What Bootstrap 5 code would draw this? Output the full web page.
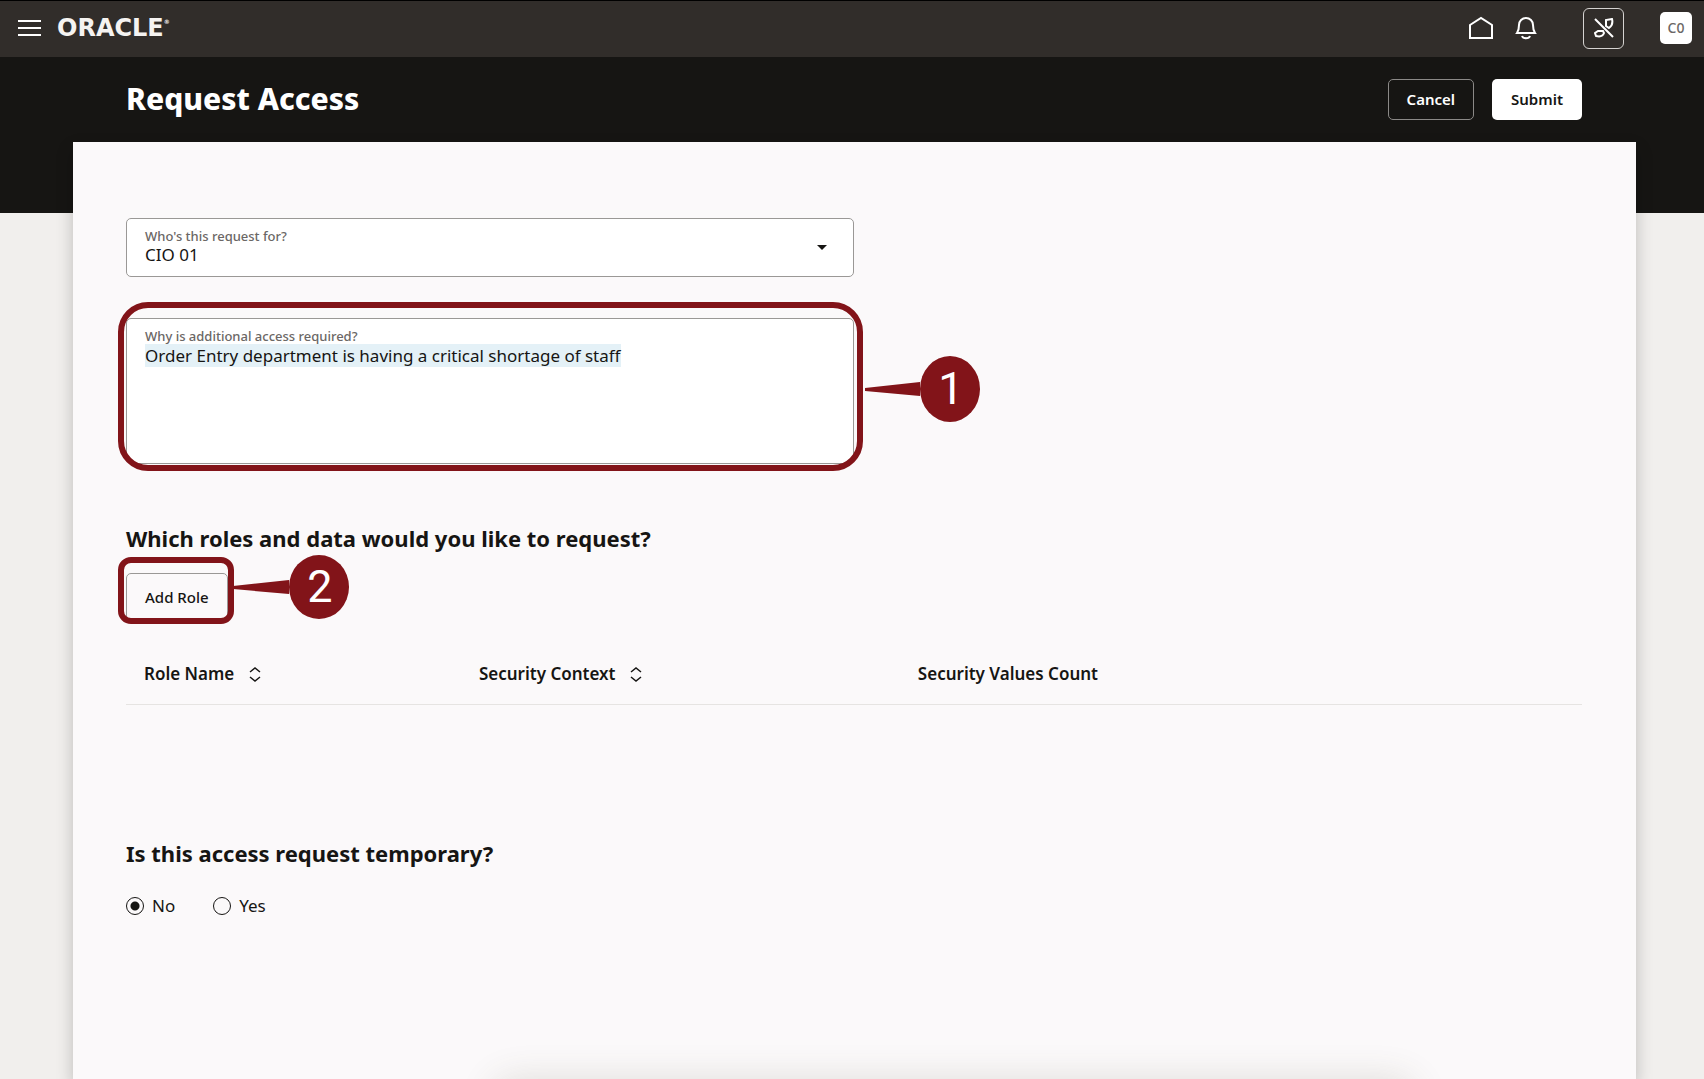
<!DOCTYPE html>
<html lang="en">
<head>
<meta charset="utf-8">
<meta name="viewport" content="width=device-width, initial-scale=1">
<title>Request Access</title>
<link href="https://cdn.jsdelivr.net/npm/bootstrap@5.3.0/dist/css/bootstrap.min.css" rel="stylesheet">
<style>
  body { font-family: "Noto Sans", "Open Sans", sans-serif; color: #161513; background: #f1efed; font-size: 17px; line-height: 22px; }
  .app-page { min-height: 100vh; background: linear-gradient(#161513 213px, transparent 213px); }
  .app-bar { height: 57px; background: #312d2a; border-top: 1px solid #000; padding: 0 12px 2px 18px; }
  .app-tools { gap: 22px; }
  .brand-word { font: bold 24px/24px "DejaVu Sans", sans-serif; color: #f5f3f1; }
  .brand-word sup { font-size: 6px; top: -12px; }
  .plain-btn { background: none; border: 0; padding: 0; line-height: 0; }
  .bar-btn { width: 41px; height: 41px; border: 1px solid #d5d3d1; border-radius: 6px; margin: 0 14px 0 24px; }
  .user-chip { width: 32px; height: 32px; border: 0; border-radius: 5px; background: #fff; color: #6b6765; font-size: 14px; font-weight: 500; padding: 0; }
  .sheet-wrap { padding: 0 68px 0 73px; }
  .page-head { height: 85px; padding: 0 54px 2px 53px; }
  .page-head h1 { font-size: 30px; line-height: 40px; font-weight: 800; color: #fff; }
  .page-actions { gap: 18px; padding-top: 2px; }
  .act-btn { height: 41px; padding: 0 18px 2px; font-size: 15px; line-height: 20px; font-weight: 600; border-radius: 5px; }
  .act-outline { border: 1px solid #8b8987; color: #fff; }
  .act-solid { background: #fff; color: #161513; }
  .sheet { background: #fbf9fa; padding: 76px 54px 0 53px; min-height: calc(100vh - 142px); box-shadow: 0 8px 16px rgba(0,0,0,.22); }
  .field-box { background: #fff; border: 1px solid #9a9896; border-radius: 5px; padding: 9px 18px 10px; }
  .field-box label { display: block; font-size: 13px; line-height: 16px; font-weight: 500; color: #6b6765; }
  .field-box select, .field-box textarea { display: block; width: 100%; border: 0; padding: 0; background: none; appearance: none; outline: 0; color: #161513; font-size: 17px; }
  .field-box select { line-height: 22px; height: 22px; }
  .field-box textarea { line-height: 23px; height: 109px; resize: none; }
  textarea::selection { background: #e4f1f7; color: #161513; }
  .fields { gap: 41px; }
  .section-title { font-size: 22px; line-height: 28px; font-weight: 700; margin: 0; }
  .title-roles { margin-top: 60px; }
  .add-row { margin-top: 21px; }
  .add-btn { height: 48px; padding: 0 18px; font-size: 15px; line-height: 20px; font-weight: 500; border: 1px solid #9a9896; border-radius: 5px; color: #161513; }
  .ring { position: absolute; border: 6px solid #821419; pointer-events: none; }
  .ring-field { inset: -17px -10px -8px -9px; border-radius: 30px; }
  .ring-btn { inset: -16px -6px -3px -8px; border-radius: 13px; }
  .callout { position: absolute; left: 100%; fill: #821419; pointer-events: none; }
  .callout text { font-family: Roboto, sans-serif; font-size: 45px; fill: #fff; }
  .callout-field { top: 37px; margin-left: 11px; }
  .callout-btn { top: -19px; margin-left: 5px; }
  .roles { --bs-table-bg: transparent; table-layout: fixed; margin: 32px 0 0; color: #161513; }
  .roles th { padding: 10px 18px 19px; font-weight: 600; border-bottom: 1px solid #e6e4e2; }
  .roles th svg { margin-left: 10px; }
  .roles td { height: 134px; border: 0; }
  .col-role { width: 23%; }
  .col-context { width: 30.15%; }
  .choice { gap: 38px; margin-top: 28px; }
  .choice input { appearance: none; width: 18px; height: 18px; margin: 0; border: 1px solid #161513; border-radius: 50%; }
  .choice input:checked { background: radial-gradient(circle, #161513 4px, transparent 5px); }
  .bottom-bar { position: fixed; left: 29%; right: 17%; top: 100%; height: 60px; border-radius: 20px; box-shadow: 0 0 36px rgba(80,80,50,.16); }
</style>
<script src="https://cdn.jsdelivr.net/npm/bootstrap@5.3.0/dist/js/bootstrap.bundle.min.js"></script>
</head>
<body>
<div class="app-page">
  <header class="app-bar d-flex align-items-center">
    <button type="button" class="plain-btn" aria-label="Navigation menu">
      <svg width="23" height="18" stroke="#fff" stroke-width="2"><path d="M0 2h23M0 9h23M0 16h23"/></svg>
    </button>
    <a href="#" class="brand-word text-decoration-none ms-3">ORACLE<sup>®</sup></a>
    <nav class="app-tools d-flex align-items-center ms-auto">
      <button type="button" class="plain-btn" aria-label="Home">
        <svg width="24" height="24" fill="none" stroke="#fff" stroke-width="2"><path d="M1 9 12 2l11 7v13H1z"/></svg>
      </button>
      <button type="button" class="plain-btn" aria-label="Notifications">
        <svg width="22" height="24" fill="none" stroke="#fff" stroke-width="2"><path d="M2 17c2-3 2-4 2-8a7 7 0 0 1 14 0c0 4 0 5 2 8zM7 20c1 3 7 3 8 0"/></svg>
      </button>
      <button type="button" class="plain-btn bar-btn" aria-label="Phone disconnected">
        <svg width="20" height="20" fill="none" stroke="#fff" stroke-width="2"><path d="m1 1 18 18M12 8V2l6-1c1 4 0 7-3 9zM9 13H4l-3 2 1 3c4 1 7 0 8-3z"/></svg>
      </button>
      <button type="button" class="user-chip">C0</button>
    </nav>
  </header>

  <div class="sheet-wrap">
    <div class="page-head d-flex align-items-center">
      <h1 class="m-0">Request Access</h1>
      <div class="page-actions d-flex ms-auto">
        <button type="button" class="btn act-btn act-outline">Cancel</button>
        <button type="submit" form="request" class="btn act-btn act-solid">Submit</button>
      </div>
    </div>

    <main class="sheet">
      <form id="request">
        <div class="fields d-flex flex-column w-50">
          <div class="field-box d-flex align-items-center">
            <div class="flex-grow-1">
              <label for="who">Who's this request for?</label>
              <select id="who"><option>CIO 01</option></select>
            </div>
            <svg class="me-2" width="10" height="5"><path d="M0 0h10L5 5z" fill="#161513"/></svg>
          </div>
          <div class="field-box position-relative">
            <label for="why">Why is additional access required?</label>
            <textarea id="why">Order Entry department is having a critical shortage of staff</textarea>
            <div class="ring ring-field"></div>
            <svg class="callout callout-field" width="116" height="66"><path d="M1 32 56 26v14L1 35z"/><ellipse cx="86" cy="33" rx="30" ry="33"/><text x="87" y="48" text-anchor="middle">1</text></svg>
          </div>
        </div>

        <h2 class="section-title title-roles">Which roles and data would you like to request?</h2>
        <div class="add-row d-flex">
          <div class="position-relative">
            <button type="button" class="btn add-btn">Add Role</button>
            <div class="ring ring-btn"></div>
            <svg class="callout callout-btn" width="116" height="66"><path d="M0 32 56 26v14L0 35z"/><ellipse cx="86" cy="33" rx="30" ry="32"/><text x="87" y="48" text-anchor="middle">2</text></svg>
          </div>
        </div>

        <table class="table roles">
          <colgroup><col class="col-role"><col class="col-context"><col></colgroup>
          <thead>
            <tr>
              <th scope="col">Role Name <svg width="12" height="16" fill="none" stroke="#161513" stroke-width="1.5"><path d="m1 5 5-4 5 4M1 10l5 4 5-4"/></svg></th>
              <th scope="col">Security Context <svg width="12" height="16" fill="none" stroke="#161513" stroke-width="1.5"><path d="m1 5 5-4 5 4M1 10l5 4 5-4"/></svg></th>
              <th scope="col">Security Values Count</th>
            </tr>
          </thead>
          <tbody><tr><td colspan="3"></td></tr></tbody>
        </table>

        <h2 class="section-title" id="temp">Is this access request temporary?</h2>
        <div class="choice d-flex" role="radiogroup" aria-labelledby="temp">
          <div class="d-flex align-items-center gap-2"><input type="radio" name="temporary" id="no" checked><label for="no">No</label></div>
          <div class="d-flex align-items-center gap-2"><input type="radio" name="temporary" id="yes"><label for="yes">Yes</label></div>
        </div>
      </form>
    </main>
  </div>
  <div class="bottom-bar"></div>
</div>
<script>
  const why = document.getElementById('why');
  why.focus();
  why.select();
</script>
</body>
</html>
